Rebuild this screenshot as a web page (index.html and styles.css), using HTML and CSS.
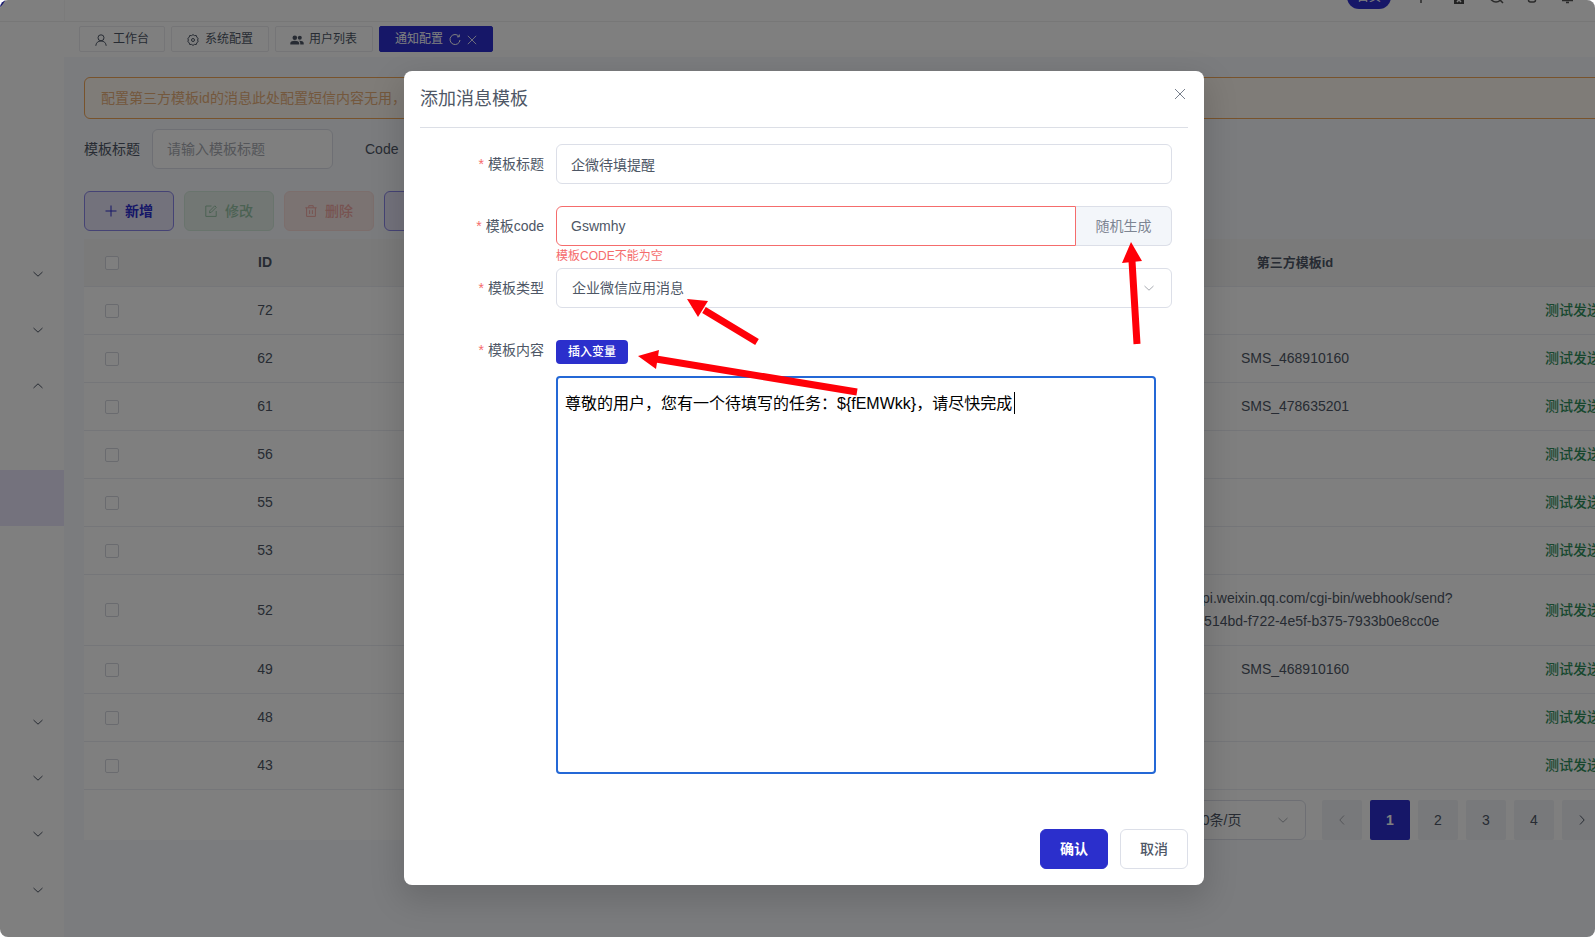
FILE: index.html
```html
<!DOCTYPE html>
<html lang="zh-CN">
<head>
    <meta charset="UTF-8">
    <title>通知配置</title>
    <link rel="stylesheet" href="styles.css">
</head>
<body>
<svg class="sprite" aria-hidden="true">
    <symbol id="down" viewBox="0 0 12 12"><path d="M1.5 4 6 8.2 10.5 4"/></symbol>
    <symbol id="up" viewBox="0 0 12 12"><path d="M1.5 8 6 3.8 10.5 8"/></symbol>
    <symbol id="left" viewBox="0 0 12 12"><path d="M8 1.5 3.8 6 8 10.5"/></symbol>
    <symbol id="right" viewBox="0 0 12 12"><path d="M4 1.5 8.2 6 4 10.5"/></symbol>
    <symbol id="close" viewBox="0 0 12 12"><path d="M1 1l10 10M11 1l-10 10"/></symbol>
</svg>
<div class="screen">
    <div class="layout">
        <nav class="sidebar">
            <div class="logo"></div>
            <div class="item"></div>
            <div class="item"></div>
            <div class="item"></div>
            <div class="item"></div>
            <div class="item"><svg class="icon"><use href="#down"/></svg></div>
            <div class="item"><svg class="icon"><use href="#down"/></svg></div>
            <div class="item"><svg class="icon"><use href="#up"/></svg></div>
            <div class="item"></div>
            <div class="item active"></div>
            <div class="item"></div>
            <div class="item"></div>
            <div class="item"></div>
            <div class="item"><svg class="icon"><use href="#down"/></svg></div>
            <div class="item"><svg class="icon"><use href="#down"/></svg></div>
            <div class="item"><svg class="icon"><use href="#down"/></svg></div>
            <div class="item"><svg class="icon"><use href="#down"/></svg></div>
        </nav>
        <div class="main">
            <header class="header">
                <a href="#" class="home">首页</a>
                <svg class="tool" viewBox="0 0 20 20"><path d="M8 2v17M4 4h8"/></svg>
                <svg class="tool" viewBox="0 0 20 20"><path class="fill" d="M5 3h10v18H5z"/><path class="cut" d="M8 13.500l4 4.500M12 13.500l-4 4.500"/></svg>
                <svg class="tool" viewBox="0 0 20 20"><circle cx="11" cy="12" r="6"/><path d="M15 16l3 3"/></svg>
                <svg class="tool" viewBox="0 0 20 20"><rect x="7.500" y="6" width="7" height="12" rx="2"/></svg>
                <svg class="tool" viewBox="0 0 20 20"><path d="M5.500 16v-6a5 5 0 0 1 10 0v6M5 16.500h11M9 18.500h3"/></svg>
            </header>
            <div class="tabs">
                <a href="#" class="tab">
                    <svg class="icon" viewBox="0 0 12 12"><circle cx="6" cy="3.8" r="3"/><path d="M.8 11.8C1 8.800 3 7 6 7s5 1.800 5.200 4.800"/></svg>工作台</a>
                <a href="#" class="tab">
                    <svg class="icon" viewBox="0 0 12 12"><path d="M6 .6l1.500 1 1.800-.1.500 1.800 1.400 1.100L10.600 6l.6 1.600-1.400 1.100-.5 1.800-1.800-.1-1.500 1-1.500-1-1.800.1-.5-1.800L.8 7.600 1.400 6 .8 4.400l1.400-1.100.5-1.800 1.800.1z"/><circle cx="6" cy="6" r="1.500"/></svg>系统配置</a>
                <a href="#" class="tab">
                    <svg class="icon wide" viewBox="0 0 14 12"><g class="fill"><circle cx="4.800" cy="3.800" r="2.300"/><circle cx="9.800" cy="3.800" r="2"/><path d="M.3 10.600V9c0-1.500 2.500-2.300 4.500-2.300S9.200 7.500 9.200 9v1.600zM10.200 10.600V9c0-1-.5-1.700-1.200-2.200 2-.2 4.700.6 4.700 2.200v1.600z"/></g></svg>用户列表</a>
                <a href="#" class="tab current">通知配置
                    <svg class="icon" viewBox="0 0 12 12"><path d="M10 2.500A5 5 0 1 0 11 6M10.300.5v2.300H8"/></svg>
                    <svg class="icon small"><use href="#close"/></svg></a>
            </div>
            <div class="content">
                <div class="alert">配置第三方模板id的消息此处配置短信内容无用，</div>
                <div class="search">
                    <label for="keyword">模板标题</label>
                    <input id="keyword" class="input" type="text" placeholder="请输入模板标题">
                    <span class="code">Code</span>
                </div>
                <div class="toolbar">
                    <button type="button" class="btn plain"><svg class="icon" viewBox="0 0 12 12"><path d="M6 .5v11M.5 6h11"/></svg>新增</button>
                    <button type="button" class="btn edit" disabled><svg class="icon" viewBox="0 0 12 12"><path d="M6.500 1H.8v10.400h10.400V6M4.500 7.800l.3-2L9.800.8l1.500 1.500-5 5z"/></svg>修改</button>
                    <button type="button" class="btn del" disabled><svg class="icon" viewBox="0 0 12 12"><path d="M.3 2.800h11.400M3.800 2.600V.7h4.400v1.900M1.600 2.800v8.600h8.800V2.800M4.600 5.200v3.800M7.400 5.200v3.800"/></svg>删除</button>
                    <button type="button" class="btn plain" aria-label="更多"></button>
                </div>
                <table class="table">
                    <colgroup><col class="c-check"><col class="c-id"><col><col class="c-third"><col class="c-op"></colgroup>
                    <thead>
                    <tr><th><input type="checkbox" aria-label="全选"></th><th>ID</th><th></th><th class="third">第三方模板id</th><th></th></tr>
                    </thead>
                    <tbody>
                    <tr><td><input type="checkbox" aria-label="72"></td><td>72</td><td></td><td></td><td><a href="#">测试发送</a></td></tr>
                    <tr><td><input type="checkbox" aria-label="62"></td><td>62</td><td></td><td>SMS_468910160</td><td><a href="#">测试发送</a></td></tr>
                    <tr><td><input type="checkbox" aria-label="61"></td><td>61</td><td></td><td>SMS_478635201</td><td><a href="#">测试发送</a></td></tr>
                    <tr><td><input type="checkbox" aria-label="56"></td><td>56</td><td></td><td></td><td><a href="#">测试发送</a></td></tr>
                    <tr><td><input type="checkbox" aria-label="55"></td><td>55</td><td></td><td></td><td><a href="#">测试发送</a></td></tr>
                    <tr><td><input type="checkbox" aria-label="53"></td><td>53</td><td></td><td></td><td><a href="#">测试发送</a></td></tr>
                    <tr><td><input type="checkbox" aria-label="52"></td><td>52</td><td></td><td>https://qyapi.weixin.qq.com/cgi-bin/webhook/send?<br>key=000514bd-f722-4e5f-b375-7933b0e8cc0e</td><td><a href="#">测试发送</a></td></tr>
                    <tr><td><input type="checkbox" aria-label="49"></td><td>49</td><td></td><td>SMS_468910160</td><td><a href="#">测试发送</a></td></tr>
                    <tr><td><input type="checkbox" aria-label="48"></td><td>48</td><td></td><td></td><td><a href="#">测试发送</a></td></tr>
                    <tr><td><input type="checkbox" aria-label="43"></td><td>43</td><td></td><td></td><td><a href="#">测试发送</a></td></tr>
                    </tbody>
                </table>
                <div class="pager">
                    <div class="select size">
                        <select aria-label="每页条数"><option>10条/页</option></select>
                        <svg class="icon"><use href="#down"/></svg>
                    </div>
                    <button type="button" class="page" disabled aria-label="上一页"><svg class="icon"><use href="#left"/></svg></button>
                    <button type="button" class="page current">1</button>
                    <button type="button" class="page">2</button>
                    <button type="button" class="page">3</button>
                    <button type="button" class="page">4</button>
                    <button type="button" class="page" aria-label="下一页"><svg class="icon"><use href="#right"/></svg></button>
                </div>
            </div>
        </div>
    </div>

    <div class="overlay">
        <form class="dialog" role="dialog" aria-labelledby="title">
            <div class="dialog-head">
                <h2 id="title">添加消息模板</h2>
                <button type="button" class="close" aria-label="关闭"><svg class="icon"><use href="#close"/></svg></button>
            </div>
            <div class="dialog-body">
                <div class="row">
                    <label for="tpl-title">模板标题</label>
                    <input id="tpl-title" class="input" type="text" value="企微待填提醒">
                </div>
                <div class="row">
                    <label for="tpl-code">模板code</label>
                    <div class="group">
                        <input id="tpl-code" class="input error" type="text" value="Gswmhy">
                        <button type="button" class="append">随机生成</button>
                        <p class="tip">模板CODE不能为空</p>
                    </div>
                </div>
                <div class="row">
                    <label for="tpl-type">模板类型</label>
                    <div class="select">
                        <select id="tpl-type"><option>企业微信应用消息</option></select>
                        <svg class="icon"><use href="#down"/></svg>
                    </div>
                </div>
                <div class="row">
                    <label for="tpl-content">模板内容</label>
                    <div class="editor">
                        <button type="button" class="insert">插入变量</button>
                        <textarea id="tpl-content" spellcheck="false">尊敬的用户，您有一个待填写的任务：${fEMWkk}，请尽快完成</textarea>
                        <span class="caret"></span>
                    </div>
                </div>
            </div>
            <div class="dialog-foot">
                <button type="button" class="btn primary">确认</button>
                <button type="button" class="btn">取消</button>
            </div>
            <svg class="arrows" viewBox="0 0 800 814" aria-hidden="true">
                <path d="M300 239 353 271M252 288 453 321M728 190 733 273"/>
                <path class="head" d="M283 228 304 230 294 246zM234 285 255 279 252 298zM727 171 738 190 718 192z"/>
            </svg>
        </form>
    </div>
</div>
</body>
</html>
```
FILE: styles.css
```css
*{
    box-sizing: border-box;
}
body{
    margin: 0;
    background: #fff;
    color: #4e5766;
    font: 14px/23px "Liberation Sans", "Noto Sans CJK SC", sans-serif;
}
a{
    color: inherit;
    text-decoration: none;
}
button, input, select, textarea{
    font: inherit;
    color: inherit;
}
.sprite{
    display: none;
}
.icon{
    width: 12px;
    height: 12px;
    flex: none;
    fill: none;
    stroke: currentColor;
    stroke-width: 1;
}
.icon .fill{
    fill: currentColor;
    stroke: none;
}
.screen{
    position: relative;
    height: 100vh;
    overflow: hidden;
    border-radius: 8px;
    background: #f6f8fc;
}
/* 顶部已滚动出去一部分 */
.layout{
    display: flex;
    min-width: 1700px;
    margin-top: -34px;
}

/* 左侧菜单 */
.sidebar{
    width: 64px;
    flex: none;
    min-height: calc(100vh + 34px);
    background: #fff;
}
.logo{
    height: 56px;
    border-bottom: 1px solid #eee;
    background: radial-gradient(circle at -16px 24px, #2d2fd0 23px, #fff 24px);
}
.item{
    display: flex;
    align-items: center;
    justify-content: flex-end;
    height: 56px;
    padding-right: 20px;
}
.item.active{
    background: #e9e5fb;
}

.main{
    flex: 1;
    min-width: 0;
}
.header{
    display: flex;
    align-items: center;
    justify-content: flex-end;
    gap: 16px;
    height: 56px;
    padding-right: 123px;
    border-bottom: 1px solid #eee;
    border-left: 1px solid #f6f6f6;
    background: #fff;
}
.home{
    margin: 6px 6px 0 0;
    padding: 0 10px;
    border-radius: 12px;
    background: #2d2fd0;
    color: #fff;
    font-size: 12px;
    line-height: 24px;
}
.tool{
    width: 20px;
    height: 20px;
    fill: none;
    stroke: #555;
    stroke-width: 1.5;
}
.tool .fill{
    fill: #444;
    stroke: none;
}
.tool .cut{
    stroke: #fff;
}
.tabs{
    display: flex;
    align-items: center;
    gap: 6px;
    height: 35px;
    padding: 0 15px 2px;
    background: #fff;
}
.tab{
    display: flex;
    align-items: center;
    gap: 6px;
    height: 26px;
    padding: 2px 15px 0;
    border: 1px solid #ebebee;
    border-radius: 2px;
    font-size: 12px;
}
.tab .wide{
    width: 14px;
    margin: 0 -1px;
}
.tab .small{
    width: 10px;
    height: 10px;
}
.tab.current{
    border-color: #2d2fd0;
    background: #2d2fd0;
    color: #fff;
}

.content{
    padding: 20px;
}
.alert{
    padding: 9px 16px;
    height: 42px;
    border: 1px solid #f0a659;
    border-radius: 6px;
    background: #fff8f0;
    color: #e8b07a;
}
.search{
    display: flex;
    align-items: center;
    gap: 12px;
    margin: 10px 0 22px;
}
.input{
    height: 40px;
    padding: 0 14px;
    border: 1px solid #dcdfe8;
    border-radius: 6px;
    background: #fff;
    outline: none;
}
.input::placeholder{
    color: #a8abb2;
}
.search .input{
    width: 181px;
}
.code{
    margin-left: 20px;
}
.toolbar{
    display: flex;
    gap: 10px;
    margin-bottom: 8px;
}
.btn{
    display: flex;
    align-items: center;
    justify-content: center;
    gap: 8px;
    min-width: 68px;
    height: 40px;
    padding: 0 19px;
    border: 1px solid #dcdfe8;
    border-radius: 6px;
    background: #fff;
    font-weight: 500;
}
.toolbar .btn{
    width: 90px;
}
.btn.plain{
    border-color: #8a86ea;
    background: #e7e4f8;
    color: #2d2fd0;
    font-weight: 700;
}
.btn.edit{
    border-color: #d3e8da;
    background: #e5efe9;
    color: #97c4a6;
}
.btn.del{
    border-color: #f8dcd9;
    background: #f7e6e5;
    color: #efa7a2;
}
.btn.primary{
    border-color: #2b2fcc;
    background: #2b2fcc;
    color: #fff;
    font-weight: 700;
}

/* 表格 */
.table{
    width: 100%;
    table-layout: fixed;
    border-collapse: separate;
    border-spacing: 0;
    background: #fff;
    text-align: center;
}
.c-check{
    width: 56px;
}
.c-id{
    width: 250px;
}
.c-third{
    width: 350px;
}
.c-op{
    width: 210px;
}
.table th, .table td{
    padding: 12px;
    height: 48px;
    border-bottom: 1px solid #ebecf2;
}
.table td:last-child{
    padding-right: 16px;
}
.table th{
    background: #f5f5f5;
}
.table th.third{
    font-size: 13px;
}
.table td a{
    color: #2f8f5c;
    font-weight: 500;
}
.table input{
    display: block;
    appearance: none;
    width: 14px;
    height: 14px;
    margin: 0 auto;
    border: 1px solid #d4d7de;
    border-radius: 2px;
    background: #fff;
}
.pager{
    display: flex;
    justify-content: flex-end;
    gap: 8px;
    padding: 10px 78px 0 0;
    background: #fff;
}
.page{
    display: flex;
    align-items: center;
    justify-content: center;
    width: 40px;
    height: 40px;
    padding: 0;
    border: 0;
    border-radius: 2px;
    background: #f0f2f6;
}
.page:disabled{
    color: #a8abb2;
}
.page.current{
    background: #2d2fd0;
    color: #fff;
    font-weight: 700;
}
.select{
    position: relative;
    flex: 1;
}
.select select{
    display: block;
    appearance: none;
    width: 100%;
    height: 40px;
    padding: 0 15px;
    border: 1px solid #dcdfe8;
    border-radius: 6px;
    background: #fff;
}
.select .icon{
    position: absolute;
    right: 17px;
    top: 14px;
    color: #a8abb2;
}
.select.size{
    flex: none;
    width: 128px;
    margin-right: 8px;
}

/* 弹窗 */
.overlay{
    position: absolute;
    inset: 0;
    display: flex;
    align-items: flex-start;
    justify-content: center;
    padding: 71px 0 0 13px;
    background: rgba(0, 0, 0, .5);
}
.dialog{
    position: relative;
    width: 800px;
    padding: 16px;
    border-radius: 8px;
    background: #fff;
    box-shadow: 0 12px 32px 4px rgba(0, 0, 0, .14);
}
.dialog-head{
    display: flex;
    align-items: flex-start;
    justify-content: space-between;
    height: 41px;
    border-bottom: 1px solid #dcdfe6;
}
.dialog-head h2{
    margin: 0;
    font-size: 18px;
    line-height: 24px;
    font-weight: 400;
}
.close{
    display: flex;
    padding: 1px 2px;
    border: 0;
    background: none;
    color: #777f8c;
}
.dialog-body{
    padding: 16px 16px 55px 0;
}
.row{
    display: flex;
    margin-bottom: 22px;
}
.row:last-child{
    margin-bottom: 0;
}
.row label{
    width: 136px;
    padding-right: 12px;
    line-height: 40px;
    text-align: right;
}
.row label::before{
    content: "*";
    margin-right: 4px;
    color: #f56c6c;
}
.row .input{
    flex: 1;
    min-width: 0;
}
.group{
    position: relative;
    display: flex;
    flex: 1;
}
.group .error{
    border-color: #f56c6c;
    border-radius: 6px 0 0 6px;
}
.append{
    width: 96px;
    border: 1px solid #dcdfe8;
    border-left: 0;
    border-radius: 0 6px 6px 0;
    background: #f3f6fa;
    color: #7d8592;
}
.tip{
    position: absolute;
    left: 0;
    top: 100%;
    margin: 0;
    color: #f56c6c;
    font-size: 12px;
    line-height: 20px;
}
.editor{
    position: relative;
    flex: 1;
    padding: 10px 16px 0 0;
}
.insert{
    display: block;
    height: 24px;
    margin-bottom: 12px;
    padding: 0 12px;
    border: 0;
    border-radius: 4px;
    background: #2b2fcc;
    color: #fff;
    font-size: 12px;
    line-height: 24px;
    font-weight: 500;
}
.editor textarea{
    display: block;
    width: 100%;
    height: 398px;
    padding: 14px 7px;
    border: 2px solid #2468d6;
    border-radius: 4px;
    outline: none;
    resize: none;
    color: #000;
    font-size: 16px;
    line-height: 24px;
}
.caret{
    position: absolute;
    left: 458px;
    top: 62px;
    width: 1px;
    height: 22px;
    background: #000;
}
.dialog-foot{
    display: flex;
    justify-content: flex-end;
    gap: 12px;
}
.arrows{
    position: absolute;
    left: 0;
    top: 0;
    width: 800px;
    height: 814px;
    fill: none;
    stroke: #ff0008;
    stroke-width: 7;
    pointer-events: none;
}
.arrows .head{
    fill: #ff0008;
    stroke: none;
}
```
